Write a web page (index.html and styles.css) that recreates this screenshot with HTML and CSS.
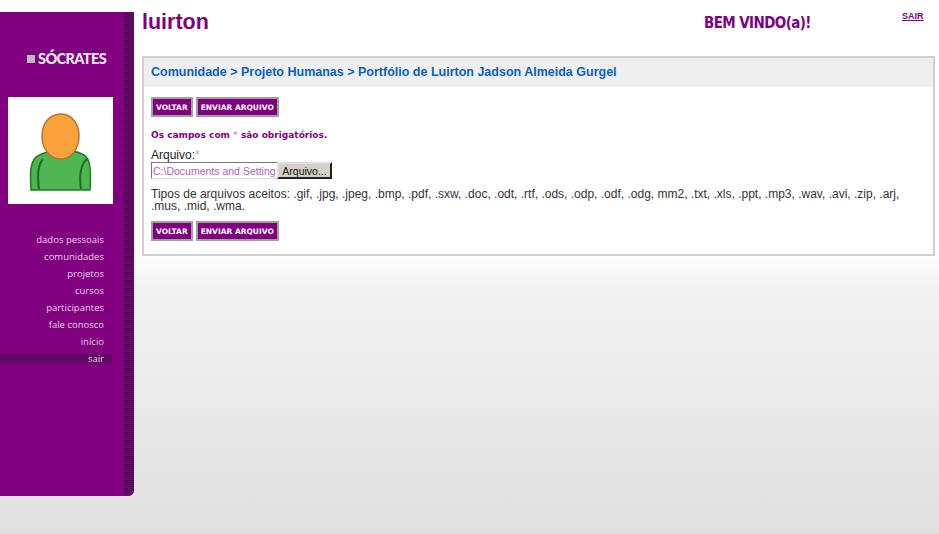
FILE: index.html
```html
<!DOCTYPE html>
<html lang="pt">
<head>
<meta charset="utf-8">
<title>Sócrates</title>
<link rel="stylesheet" href="styles.css">
</head>
<body>
<div class="page">
  <aside class="sidebar">
    <div class="side-main">
      <div class="logo"><span class="logo-square"></span><span>SÓCRATES</span></div>
      <div class="avatar">
        <svg width="68" height="80" viewBox="0 0 68 80">
          <path d="M4 77 C3 60 3 50 9 44 C14 40 20 39 25 38 L44 38 C50 39 57 40 60 45 C64 50 64 62 63 77 Z" fill="#4fb552" stroke="#1c7a24" stroke-width="1.5"/>
          <path d="M12 76 C10 62 11 52 16 46 M54 76 C52 62 53 52 60 46" fill="none" stroke="#17711f" stroke-width="2"/>
          <path d="M34 1 C46 1 52 12 52 23 C52 36 44 46 34 46 C23 46 15 36 15 23 C15 11 22 1 34 1 Z" fill="#f9a23c" stroke="#b9742a" stroke-width="1.5"/>
        </svg>
      </div>
      <nav class="menu">
        <a href="#">dados pessoais</a>
        <a href="#">comunidades</a>
        <a href="#">projetos</a>
        <a href="#">cursos</a>
        <a href="#">participantes</a>
        <a href="#">fale conosco</a>
        <a href="#">início</a>
        <a href="#" class="current">sair</a>
      </nav>
    </div>
    <div class="side-strip"></div>
  </aside>
  <main class="content">
    <header class="top">
      <h1 class="user">luirton</h1>
      <div class="welcome">BEM VINDO(a)!</div>
      <a href="#" class="logout">SAIR</a>
    </header>
    <section class="panel">
      <h2 class="crumbs">Comunidade &gt; Projeto Humanas &gt; Portfólio de Luirton Jadson Almeida Gurgel</h2>
      <div class="panel-body">
        <div class="actions">
          <button class="btn" type="button">VOLTAR</button>
          <button class="btn" type="button">ENVIAR ARQUIVO</button>
        </div>
        <p class="required">Os campos com <span class="star">*</span> são obrigatórios.</p>
        <div class="field-label">Arquivo:<span class="star">*</span></div>
        <div class="file-row">
          <input class="file-path" type="text" value="C:\Documents and Settings\">
          <button class="file-btn" type="button">Arquivo...</button>
        </div>
        <p class="types">Tipos de arquivos aceitos: .gif, .jpg, .jpeg, .bmp, .pdf, .sxw, .doc, .odt, .rtf, .ods, .odp, .odf, .odg, mm2, .txt, .xls, .ppt, .mp3, .wav, .avi, .zip, .arj, .mus, .mid, .wma.</p>
        <div class="actions">
          <button class="btn" type="button">VOLTAR</button>
          <button class="btn" type="button">ENVIAR ARQUIVO</button>
        </div>
      </div>
    </section>
  </main>
</div>
</body>
</html>
```
FILE: styles.css
```css
* { box-sizing: border-box; }
html, body { height: 100%; }
body {
  margin: 0;
  font-family: "Liberation Sans", Arial, sans-serif;
  color: #222;
  background: linear-gradient(to bottom, #fff 0, #fff 250px, #f2f2f2 290px, #e0e0e0 534px);
  overflow: hidden;
}
.page { display: flex; height: 534px; }
.sidebar {
  flex: none;
  display: flex;
  width: 134px;
  height: 484px;
  margin-top: 12px;
  background: #800080;
  border-bottom-right-radius: 6px;
  overflow: hidden;
}
.side-main { flex: none; width: 124px; padding-top: 37px; }
.side-strip {
  flex: none;
  width: 10px;
  background: repeating-linear-gradient(to bottom, #4f0c55 0, #4f0c55 1px, #6b0a70 1px, #6b0a70 2px);
}
.logo {
  display: flex;
  align-items: center;
  height: 18px;
  padding-left: 27px;
  gap: 3px;
  color: #f4eaf4;
  font-family: Lato, sans-serif;
  font-weight: 900;
  font-size: 14.5px;
  letter-spacing: -0.6px;
}
.logo-square { width: 8px; height: 8px; margin-top: 2px; background: #bdbdbd; }
.avatar {
  display: flex;
  justify-content: center;
  align-items: flex-end;
  width: 105px;
  height: 107px;
  margin: 30px 0 0 8px;
  padding-bottom: 11px;
  background: #fff;
}
.menu { display: flex; flex-direction: column; margin-top: 27px; }
.menu a {
  height: 17px;
  padding-right: 8px;
  width: 112px;
  text-align: right;
  color: #eccdec;
  font-family: "Open Sans", sans-serif;
  font-size: 9.5px;
  line-height: 17px;
  text-decoration: none;
}
.menu a.current {
  height: 9px;
  margin-top: 4px;
  line-height: 9px;
  background: #5f0a63;
}
.content { flex: 1; min-width: 0; padding: 0 4px 0 8px; }
.top { position: relative; display: flex; height: 56px; }
.user {
  margin: 9px 0 0;
  color: #800080;
  font-size: 21.5px;
  line-height: 27px;
  font-weight: bold;
}
.welcome {
  position: absolute;
  left: 562px;
  top: 13px;
  color: #800080;
  font-family: "DejaVu Sans Condensed", "DejaVu Sans", sans-serif;
  font-weight: bold;
  font-size: 15px;
  line-height: 20px;
  letter-spacing: -0.6px;
  white-space: nowrap;
}
.logout {
  position: absolute;
  left: 759px;
  top: 10px;
  padding: 0 1px;
  color: #800080;
  font-size: 9px;
  font-weight: bold;
  line-height: 12px;
}
.panel {
  height: 200px;
  border: 2px solid #d0d0d0;
  background: #fff;
}
.crumbs {
  margin: 0;
  height: 29px;
  padding-left: 7px;
  background: #efefef;
  color: #0b5fc0;
  font-size: 12.5px;
  font-weight: bold;
  line-height: 28px;
}
.panel-body { padding: 10px 7px 0; }
.actions { display: flex; gap: 3px; height: 20px; }
.btn {
  height: 20px;
  margin: 0;
  padding: 0 3px;
  border: 2px solid #a0a0a0;
  background: #800080;
  color: #fff;
  font-family: "DejaVu Sans", sans-serif;
  font-weight: bold;
  font-size: 7.5px;
}
.required {
  margin: 12px 0 0;
  color: #800080;
  font-family: "DejaVu Sans", sans-serif;
  font-size: 9px;
  font-weight: bold;
  line-height: 12px;
}
.star { color: #c9a0c9; }
.field-label { margin-top: 7px; font-size: 12px; line-height: 14px; }
.file-row { display: flex; height: 17px; margin-top: 0; }
.file-path {
  width: 126px;
  height: 17px;
  margin: 0;
  padding: 0 1px;
  border: 1px solid #777;
  border-right: 0;
  border-bottom-color: #ddd;
  color: #b060c0;
  font-family: "Liberation Sans", Arial, sans-serif;
  font-size: 10.5px;
}
.file-btn {
  width: 55px;
  height: 17px;
  margin: 0;
  padding: 0;
  border: 2px solid;
  border-color: #ddd #222 #222 #ddd;
  background: #d4d0c8;
  color: #111;
  font-family: "Liberation Sans", Arial, sans-serif;
  font-size: 10.5px;
}
.types {
  margin: 9px 0 9px;
  font-size: 12px;
  line-height: 12px;
  color: #333;
}
```
